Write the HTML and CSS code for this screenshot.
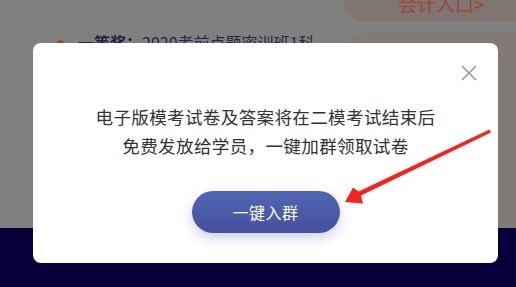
FILE: index.html
```html
<!DOCTYPE html>
<html lang="zh-CN">
<head>
<meta charset="utf-8">
<link rel="stylesheet" href="styles.css">
</head>
<body>
<div class="page">
  <div class="top-row">
    <div class="entry">会计入口&gt;</div>
  </div>
  <div class="prize-row">
    <div class="prize"><span class="dot"></span><b>一等奖：</b><span class="prize-text">2020考前点题密训班1科</span></div>
    <div class="side-card"></div>
  </div>
  <div class="footer"></div>
</div>

<div class="modal">
  <button class="close" aria-label="关闭">
    <svg width="16" height="16" viewBox="0 0 16 16"><path d="M1 1L15 15M15 1L1 15" stroke="#9a9a9a" stroke-width="1.6" fill="none"/></svg>
  </button>
  <p class="msg">电子版模考试卷及答案将在二模考试结束后<br>免费发放给学员，一键加群领取试卷</p>
  <button class="join">一键入群</button>
</div>

<svg class="arrow" width="516" height="287" viewBox="0 0 516 287">
  <polygon points="489.5,129.5 491,132.5 361,195.5 363,203.5 345,202 353,187.5 358.5,191.5" fill="#f5241c"/>
</svg>
</body>
</html>
```

FILE: styles.css
```css
* { box-sizing: border-box; }
html, body { margin: 0; padding: 0; }
body {
  width: 516px;
  height: 287px;
  overflow: hidden;
  background: #808080;
  font-family: "Noto Sans CJK SC", "Noto Sans", sans-serif;
  position: relative;
}
.page {
  display: flex;
  flex-direction: column;
  height: 287px;
}
.top-row {
  display: flex;
  justify-content: flex-end;
  height: 33px;
}
.entry {
  width: 173px;
  height: 42px;
  margin-top: -20px;
  background: #7f7571;
  border-radius: 0 0 0 22px;
  color: #9b4a3b;
  font-size: 19px;
  line-height: 40px;
  padding-left: 55px;
  padding-top: 4px;
  white-space: nowrap;
}
.prize-row {
  display: flex;
  justify-content: space-between;
  align-items: flex-start;
  height: 195px;
}
.prize {
  display: flex;
  align-items: center;
  padding-left: 57px;
  height: 18px;
  font-size: 16px;
  color: #1f1d3d;
  white-space: nowrap;
}
.dot {
  width: 7px;
  height: 7px;
  border-radius: 50%;
  background: #a24a2c;
  margin-right: 14px;
  margin-top: 3px;
}
.prize b { font-weight: 700; color: #232046; }
.prize-text { color: #28253f; }
.side-card {
  width: 171px;
  height: 195px;
  background: #827a76;
  border-radius: 22px 0 0 0;
}
.footer {
  flex: 1;
  background: #08003a;
}
.modal {
  position: absolute;
  left: 33px;
  top: 43px;
  width: 465px;
  height: 220px;
  background: #fff;
  border-radius: 8px;
  display: flex;
  flex-direction: column;
  align-items: center;
  padding-top: 59px;
}
.close {
  position: absolute;
  right: 21px;
  top: 22px;
  width: 16px;
  height: 16px;
  padding: 0;
  border: 0;
  background: none;
  display: block;
}
.close svg { display: block; }
.msg {
  margin: 0;
  font-size: 17.6px;
  line-height: 29px;
  color: #333;
  text-align: center;
  letter-spacing: 0.3px;
}
.join {
  margin-top: 31px;
  width: 148px;
  height: 42px;
  border: 0;
  border-radius: 21px;
  background: linear-gradient(180deg, #5166b4 0%, #45519c 100%);
  box-shadow: 0 5px 12px rgba(80, 95, 180, 0.28);
  color: #fff;
  font-family: "Noto Sans CJK SC", sans-serif;
  font-size: 16px;
  letter-spacing: 0.5px;
}
.arrow {
  position: absolute;
  left: 0;
  top: 0;
  pointer-events: none;
}
```
